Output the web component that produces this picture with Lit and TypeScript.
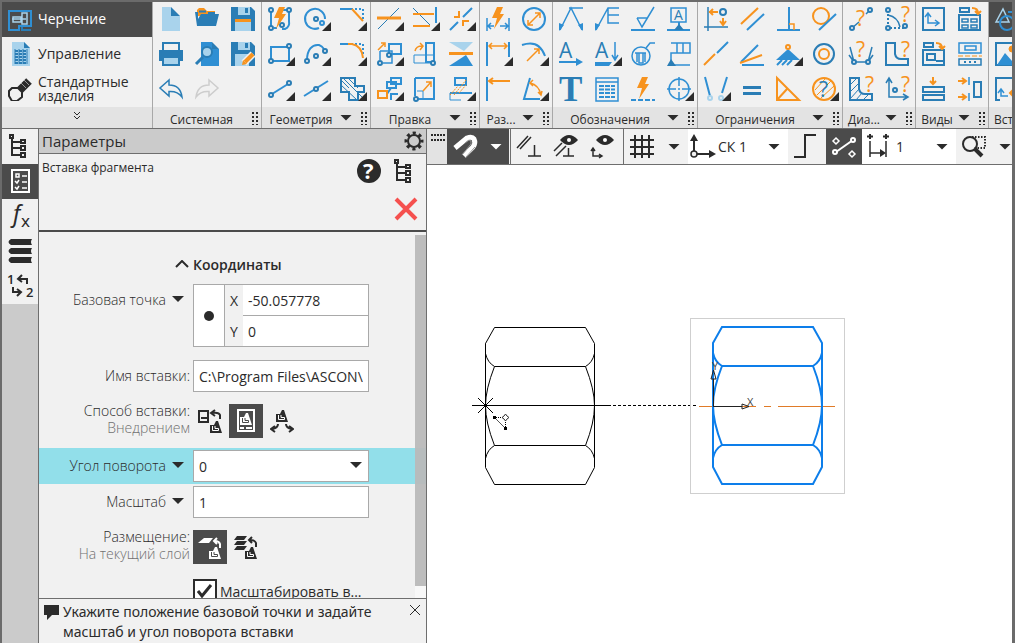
import { LitElement, html, svg, css, nothing } from "lit";
import { customElement } from "lit/decorators.js";
import { classMap } from "lit/directives/class-map.js";

const BLUE = "#2f8fd3";
const DEEP = "#2a7db5";
const PALE = "#a9d3ec";
const ORANGE = "#f7931e";
const INK = "#2b2b2b";

const line = (d: string, color = BLUE, width = 2, dash = "") =>
  svg`<path d=${d} fill="none" stroke=${color} stroke-width=${width} stroke-dasharray=${dash || nothing} />`;
const fill = (d: string, color = BLUE) => svg`<path d=${d} fill=${color} />`;
const ring = (x: number, y: number, r = 2, color = DEEP, width = 2, inner = "#f1f1f1") =>
  svg`<circle cx=${x} cy=${y} r=${r} fill=${inner} stroke=${color} stroke-width=${width} />`;
const glyph = (x: number, y: number, size: number, text: string, color = DEEP, family = "Open Sans", weight = 400) =>
  svg`<text x=${x} y=${y} font-size=${size} font-family=${family} font-weight=${weight} fill=${color}>${text}</text>`;
const ask = (x: number, y: number) => glyph(x, y, 21, "?", ORANGE, "Open Sans", 500);

const bolt = (x: number, y: number) =>
  svg`<path transform="translate(${x} ${y})" d="M5 0H11L8 7H12L2 22L5 11H0z" fill=${ORANGE} />`;
const cad = (x: number, y: number, ink: string, paper: string) => svg`<g transform="translate(${x} ${y})">
  <path d="M6 0H8L12 12H0V4H4z" fill=${ink} /><path d="M2.500 5V9.500H8.500V7.500H5V5" fill="none" stroke=${paper} /></g>`;

const icons: Record<string, unknown> = {
  // system
  fresh: [fill("M3 0H12V9H21V24H3z", PALE), fill("M12 0L21 9H12z", DEEP)],
  open: [fill("M2 3L4 1H9L12 4H20V9H2z", ORANGE), fill("M0 5H3V12L6 7H24L21 19H2z", DEEP), line("M4 4.5H11M13 6H20", DEEP)],
  save: [fill("M0 0H20L24 4V24H0z", DEEP), fill("M7 0H19V8H7z", PALE), fill("M14 1H17V6H14z", DEEP), fill("M4 12H20V24H4z", PALE), fill("M4 12H20V15H4z", ORANGE)],
  print: [fill("M0 8H24V19H0z", DEEP), line("M4 8V1H20V8", DEEP), fill("M3 15H21V24H3z", DEEP), fill("M5 16H19V22H5z", PALE)],
  preview: [fill("M6 0H17V7H24V24H6z", BLUE), fill("M17 0L24 7H17z", DEEP), line("M1 22L8 15", DEEP, 3), ring(12, 10, 5, DEEP, 2, PALE)],
  saveas: [fill("M0 0H20L24 4V24H0z", DEEP), fill("M7 0H19V8H7z", PALE), fill("M14 1H17V6H14z", DEEP), fill("M4 12H18V24H4z", PALE), line("M13 21L22 12", "#f1f1f1", 7), line("M14 20L22 12", ORANGE, 4), fill("M11 23L12 18L16 22z", ORANGE)],
  undo: line("M10 3L1 11L10 19V14.500C16 14 20 16 23 20C22 12 18 8 10 8z", DEEP, 1.500),
  redo: line("M14 3L23 11L14 19V14.500C8 14 4 16 1 20C2 12 6 8 14 8z", "#cdcdcd", 1.500),
  // geometry
  autoline: [line("M3 4V20M6 21H9M14 22H17Q22 20 21 14V4M15 3H19"), ring(3, 3), ring(21, 3), ring(3, 21), ring(14, 18), bolt(6, 0)],
  circle: [line("M15 21A10 10 0 1 1 21 12"), ring(12, 12, 2), ring(18, 16, 2, BLUE)],
  chamfer: [line("M0 2H11"), line("M11 2H23V12", BLUE, 2, "2 2"), line("M12 2L23 14", ORANGE)],
  rect: [line("M3 5H21V19H3z"), ring(21, 4), ring(3, 19)],
  arc: [line("M3 18C3 8 8 2 15 3Q18 4 20 7", BLUE), ring(3, 19), ring(12, 14), ring(21, 9)],
  fillet: [line("M0 2H11"), line("M11 2H23V12", BLUE, 2, "2 2"), line("M8 2H12Q22 4 23 16", ORANGE)],
  segment: [line("M4 17L20 7"), ring(3, 18), ring(21, 6)],
  aux: [line("M0 19L24 4"), ring(12, 12)],
  hatch: [line("M1 1H15V9H24V15H18V23H9V15H1z", DEEP), line("M1 3L9 11M3 1L23 21M8 1L18 11M1 8L17 23", DEEP, 1)],
  // edit
  trim: [line("M1 22L22 1", DEEP, 1), line("M0 11H24", ORANGE, 3)],
  extend: [line("M0 1L17 18", DEEP, 1), line("M23 0V16"), line("M0 7H21M0 19H17", ORANGE)],
  cut: [line("M1 23L9 15M14 10L23 1"), line("M10 4V10H5M14 19V14H20", ORANGE)],
  copy: [line("M12 2H24V12H12z"), line("M3 9H15V21H6M3 9V18", BLUE, 1.500), ring(12, 13), ring(3, 21), line("M1 8L7 2M4 1H8V5", ORANGE, 1.500)],
  rotate: [line("M13 1H21V20H13z"), line("M1 13H21M1 13V21H18", BLUE, 1), ring(20, 21), line("M2 9Q3 4 9 4M7 1L10 4L7 8", ORANGE, 1.500)],
  mirror: [fill("M0 0H24L15 9z", PALE), fill("M0 24H24L17 13z", BLUE), fill("M0 10H24V13H0z", ORANGE)],
  group: [line("M14 1H24V7H14zM10 5H19V11H10zM14 23V17H21M14 11L10 17", BLUE), line("M1 14H10V21H1z", ORANGE)],
  scale: [line("M2 1H21V22H4M2 1V19"), line("M4 14H10V22", BLUE, 1), ring(3, 22), line("M10 14L18 5M13 5H18V10", ORANGE, 1.500)],
  deform: [line("M6 1H17V8H6zM1 16H23", BLUE), line("M1 16V23H12", BLUE, 1), line("M1 18L9 9M5 18L17 3M10 16L17 8", ORANGE, 1, "2 1")],
  // dimensions
  autodim: [line("M1 11V24M23 11V24M2 19H8M14 19H22M5 16L2 19L5 22M19 16L22 19L19 22", BLUE, 1.500), bolt(6, 0)],
  diam: [ring(12, 12, 11, BLUE, 2, "none"), line("M6 18L18 6M6 13V18H11M13 6H18V11", ORANGE, 1.500)],
  lindim: [line("M1 0V24M23 0V15"), line("M3 4H21M6 1L3 4L6 7M18 1L21 4L18 7", ORANGE, 1.500)],
  raddim: [line("M0 3Q17 -3 23 14"), line("M5 19L17 7M12 7H17V12", ORANGE, 1.500)],
  basedim: [line("M1 0V24"), line("M3 4H24M7 1L3 4L7 7", ORANGE, 2)],
  angdim: [line("M8 1L2 22H18"), line("M8 6Q17 8 19 18M11 3L8 6L11 9M16 15L19 18L20 14", ORANGE, 1.500)],
  // annotations
  leader: [line("M1 23L12 1L23 23M10 1H24", BLUE, 1.500), fill("M0 24V16L5 18zM24 24V16L19 18z", BLUE)],
  leader2: [line("M1 23L13 1H24M13 1V16H24M13 8H24", BLUE, 1.500), fill("M0 24V16L5 18z", BLUE)],
  rough: [line("M0 23H24"), line("M6 11H16M6 11L11 20L23 0", BLUE, 1.500)],
  base: [line("M4 1H19V15H4z", BLUE, 1.500), glyph(7, 13, 14, "A"), line("M12 15V20M0 23H23"), fill("M7 23L12 17L17 23z", DEEP)],
  arrowA: [glyph(0, 16, 21, "A", DEEP, "Open Sans", 500), line("M0 20H20", BLUE), fill("M24 20L17 16V24z", BLUE)],
  sortA: [glyph(0, 16, 21, "A", DEEP, "Open Sans", 500), line("M20 0V17M17 13L20 18L23 13", BLUE, 1.500), fill("M0 20H17L14 24H0z", BLUE)],
  node: [ring(10, 14, 9, BLUE, 1.500), line("M4 11H15M6 11V20M8 11V21H12V11M14 11V20M15 6L19 1H24", BLUE, 1.500)],
  flag: [line("M4 1H23V11H4V23H23M10 1V11M16 1V11", BLUE, 1.500), fill("M0 24L4 17L9 24z", DEEP)],
  text: glyph(0, 24, 35, "T", DEEP, "Liberation Serif", 700),
  table: [line("M1 1H23V24H1zM1 5H23", BLUE, 1.500), line("M4 9H20M4 12.500H20M4 16H20M4 20H20", BLUE, 2, "5 1")],
  quick: [bolt(6, 0), line("M0 23H24", BLUE, 2, "5 2")],
  center: [ring(12, 12, 10, BLUE, 1.500, "none"), line("M0 12H9M15 12H24M12 0V9M12 15V24M11 12H13", BLUE, 1.500)],
  // constraints
  fixpt: [line("M4 0V24M0 20H24", DEEP, 1.500), ring(19, 5, 3), line("M5 5H14M9 2L6 5L9 8M19 11V18M16 14L19 18L22 14", ORANGE, 2)],
  parallel: [line("M1 17L18 1", ORANGE), line("M7 23L24 7")],
  perp: [line("M13 0V23M1 23H24"), line("M13 17H18V23", ORANGE, 1.500)],
  tangent: [ring(9, 9, 8, ORANGE, 2, "none"), line("M7 23L24 7")],
  collinear: [line("M0 23L11 12", ORANGE), line("M13 11L24 0")],
  angle: [line("M1 20L18 3"), line("M0 21L22 13", ORANGE), line("M2 23H24")],
  fix: [fill("M12 7L24 18H0z", BLUE), ring(12, 5, 2, ORANGE), line("M1 23L6 18M6 23L11 18M11 23L16 18", BLUE)],
  concentric: [ring(12, 12, 10, DEEP, 2, "none"), ring(12, 12, 5, ORANGE, 2, "none")],
  symm: [line("M1 0L6 19M23 0L18 16"), ring(6, 21, 2, PALE), ring(17, 21, 2, PALE)],
  equal: [fill("M3 9H21V12H3zM3 15H21V18H3z", DEEP)],
  tri: line("M1 1V23H23zM1 23L11 12", ORANGE),
  ask: [ring(12, 12, 11, ORANGE, 2, "none"), line("M3 13L13 2M5 18L20 3M9 21L22 9", ORANGE, 1), glyph(7, 20, 21, "?", DEEP, "Open Sans", 500)],
  // diagnostics
  q1: [line("M3 21L10 15M17 7L21 3", DEEP, 1.500), ring(3, 21), ring(21, 3), ask(7, 19)],
  q2: [line("M3 3V21H20", DEEP, 2, "2 2"), line("M3 8Q13 10 15 20", DEEP, 1.500), ring(3, 3), ring(3, 21), ring(20, 19), ask(16, 15)],
  q3: [line("M1 5L5 20H19L23 5M0 13L5 20M24 13L19 20", DEEP, 1.500), ring(5, 20), ring(19, 20), ask(7, 15)],
  q4: [line("M1 1H10V12Q11 17 16 17H23V23H1z", DEEP), ask(16, 15)],
  q5: [line("M1 1H10V12Q11 17 16 17H23V23H1z", DEEP), line("M1 8L8 1M1 15L10 6M1 22L10 12M7 23L13 16M14 23L20 17", DEEP, 1), ask(16, 15)],
  q6: [line("M4 2V20H22M1 6L4 1L7 6M18 17L23 20L18 23", DEEP, 1.500), ring(10, 13), ask(16, 15)],
  // views
  view1: [line("M1 1H22V23H1z", DEEP), line("M6 7V16H16M3 10L6 6L9 10M13 13L17 16L13 19", BLUE, 1.500)],
  view2: [line("M2 1H11V5H2zM1 8H22V23H1z", DEEP), line("M4 12H10V15H4zM13 12H19V15H13zM4 18H10V21H4zM13 18H19V21H13z", DEEP, 1.500), line("M14 1Q20 1 20 6M17 4L20 7L23 4", ORANGE)],
  view3: [line("M2 1H11V5H2zM1 8H22V23H1zM5 12H13V18H5zM14 19H22", DEEP), line("M14 1Q20 1 20 6M17 4L20 7L23 4", ORANGE)],
  view4: [line("M1 1H23V11H1zM7 4H18V8H7z", BLUE, 1.500), line("M1 17H23V23H1z", DEEP, 1.500), line("M6 20H18", DEEP, 2, "2 3"), line("M0 14H24", ORANGE, 1, "5 2")],
  view5: [line("M1 10H22V15H1zM1 18H22V23H1z", DEEP), line("M11 0V6M8 4L11 7L14 4", ORANGE)],
  view6: [line("M16 5H23V20H16z", DEEP), line("M11 0V8M11 16V24", BLUE, 1.500), line("M0 4H7M4 1L8 4L4 7M0 20H7M4 17L8 20L4 23", ORANGE)],
  shapes: [line("M1 15L8 2L14 15z", PALE, 1.500), line("M13 5H22V12", BLUE), ring(12, 16, 7, BLUE, 2, "none")],
  image: [line("M1 1H24V23H1z", DEEP), fill("M2 23L10 11L17 19L24 14V23z", BLUE), ring(17, 7, 3, ORANGE, 1, ORANGE)],
  insert: [line("M24 1H1V23H5", DEEP), line("M6 13V19H13M3 16L6 12L9 16", BLUE, 1.500), line("M24 16H15M18 13L15 16L18 19", ORANGE)],
  // side bar
  tree: [line("M4 4V21H13M4 8H13M4 14H13", INK), line("M2 1H5V4H2zM13 6H17V9H13zM13 12H17V16H13zM13 19H17V23H13z", INK)],
  params: [line("M4 1H21V23H4z", "#fff"), line("M8 5H11V8H8zM14 7H19M14 13H19M14 19H19M7 12L9 14L11 11M7 18L9 20L11 17", "#fff", 1.500)],
  fx: svg`<g fill=${INK} font-family="Noto Sans"><text x="5" y="18" font-size="23" font-style="italic">f</text><text x="13" y="23" font-size="17">x</text></g>`,
  layers: [0, 9, 18].map((y) => fill(`M3 ${y}H24Q22 ${y + 3} 24 ${y + 6}H3Q-2 ${y + 3} 3 ${y}`, INK)),
  swap: [glyph(-1, 10, 13, "1", INK, "Open Sans", 600), glyph(18, 23, 13, "2", INK, "Open Sans", 600), line("M19 10V5H11M14 1L10 5L14 8M5 13V18H12M9 15L13 18L9 22", INK)],
  // panel
  help: [ring(12, 12, 11, INK, 2, INK), glyph(6, 20, 22, "?", "#fff", "Open Sans", 700)],
  cancel: line("M2 3L22 23M22 3L2 23", "#f5504e", 4),
  gear: [ring(12, 12, 6, INK, 2, "none"), svg`<circle cx="12" cy="12" r="8" fill="none" stroke=${INK} stroke-width="3" stroke-dasharray="3.140 3.140" stroke-dashoffset="1.570" />`],
  embedA: [line("M1 2H10V13H1zM3 9H9", INK), line("M22 10V6Q21 3 14 4M17 1L13 4L17 7", INK), cad(12, 12, INK, "#fff")],
  embedB: [line("M4 1H20V22H4z", "#fff"), cad(6, 4, "#fff", "#4b4b4b"), line("M6 19H10M12 19H18", "#fff")],
  embedC: [cad(6, 1, INK, "#fff"), line("M8 15Q8 19 2 20M5 17L1 20L5 23M16 15Q16 19 22 20M19 17L23 20L19 23", INK)],
  layerA: [fill("M0 8L6 3H15L11 8z", "#fff"), line("M22 13V9Q21 6 17 6M19 3L16 6L19 9", "#fff"), cad(11, 12, "#fff", "#4b4b4b")],
  layerB: [fill("M0 5L3 1H13L10 5zM0 10L3 6H13L10 10zM0 15L3 11H13L10 15z", INK), line("M22 12V8Q21 5 16 5M18 2L15 5L18 8", INK), cad(11, 12, INK, "#fff")],
  // view toolbar
  magnet: [line("M2 14L14 4Q19 2 21 5Q23 9 20 13L11 22", "#fff", 5), line("M12 9L16 6Q19 6 18 10L9 21M13 23L22 13", "#999", 1)],
  osnap: [line("M0 14L11 2M3 15L14 3M11 22H24M17.500 11V22", INK, 1.500)],
  osnapEye: [line("M0 17L8 9M2 22L12 12M9 22H20M14.500 14V22", INK, 1.500), fill("M6 6Q15 -4 24 6Q15 16 6 6", INK), ring(15, 6, 3, INK, 2, "#fff")],
  axisEye: [line("M2 14V22H11M0 17L2 14L4 17M8 20L11 22L8 24", INK, 1.500), fill("M5 6Q14 -4 23 6Q14 16 5 6", INK), ring(14, 6, 3, INK, 2, "#fff")],
  grid: line("M0 6H24M0 13H24M0 20H24M5 1V24M12 1V24M19 1V24", INK, 2),
  axes: [line("M4 2V20H22", INK, 2), fill("M4 0L8 7H0zM26 20L19 16V24z", INK), ring(4, 20, 3, INK, 1.500)],
  step: line("M0 23H11V1H22", INK, 2),
  snaps: [line("M4 18L21 6", "#fff"), ring(3, 18, 2, "#fff", 2, "#4b4b4b"), ring(21, 6, 2, "#fff", 2, "#4b4b4b"), line("M4 4L7 7L4 10L1 7zM20 17L23 20L20 23L17 20z", "#fff", 1.500)],
  dimstyle: [line("M3 8V24M19 8V24M3 20H16", INK, 1.500), fill("M19 20L13 16V24z", INK), line("M3 1V6M0 3.500H6M19 1V6M16 3.500H22", INK, 2)],
  lens: [line("M10 3H23V14H12", INK, 2, "1.500 1.500"), ring(8, 10, 7, INK, 2, "none"), line("M13 15L20 22", INK, 4)],
};

interface Tool { icon: string; name: string; more?: boolean; on?: boolean }
const t = (spec: string): Tool[] =>
  spec.split(" ").map((s) => ({ icon: s.replace(/[*!]/g, ""), name: s.replace(/[*!]/g, ""), more: s.includes("*"), on: s.includes("!") }));

const cell = (tool: Tool) => html`<button class=${classMap({ cell: true, on: !!tool.on })} aria-label=${tool.name}>
  <svg width="36" height="35" viewBox="0 0 36 35"><g transform="translate(6 5)">${icons[tool.icon]}</g>
  ${tool.more ? svg`<path d="M33 20V29H24z" fill=${INK} />` : nothing}</svg></button>`;

const groups = [
  { label: "Системная", cols: 3, menu: false, tools: t("fresh open save print preview saveas undo redo") },
  { label: "Геометрия", cols: 3, menu: true, tools: t("autoline circle* chamfer* rect* arc* fillet* segment* aux* hatch*") },
  { label: "Правка", cols: 3, menu: true, tools: t("trim* extend* cut* copy* rotate mirror group* scale deform*") },
  { label: "Раз...", cols: 2, menu: true, tools: t("autodim diam lindim* raddim* basedim angdim*") },
  { label: "Обозначения", cols: 4, menu: true, tools: t("leader leader2 rough base arrowA sortA* node flag text table quick center*") },
  { label: "Ограничения", cols: 4, menu: true, tools: t("fixpt parallel perp tangent collinear angle fix* concentric symm* equal tri ask*") },
  { label: "Диа...", cols: 2, menu: true, tools: t("q1 q2 q3 q4 q5 q6") },
  { label: "Виды", cols: 2, menu: true, tools: t("view1 view2 view3 view4 view5 view6") },
  { label: "Вста", cols: 1, menu: false, tools: t("shapes! image insert") },
];

const base = css`
  * { box-sizing: border-box; }
  button { font: inherit; color: inherit; background: none; border: 0; padding: 0; margin: 0; }
  svg { display: block; flex: none; }
  .cell { width: 36px; height: 35px; overflow: hidden; }
  .on { background: #4b4b4b; color: #fff; }
  .down { width: 12px; height: 6px; background: currentColor; clip-path: polygon(0 0, 100% 0, 50% 100%); flex: none; }
`;

@customElement("cad-ribbon")
class CadRibbon extends LitElement {
  static styles = [base, css`
    :host { display: flex; flex: none; overflow: hidden; background: #f1f1f1; border-bottom: 1px solid #6e6e6e; }
    .modes { flex: none; width: 151px; border-right: 1px solid #a8a8a8; }
    .mode { display: flex; align-items: center; width: 100%; height: 35px; padding: 0 0 2px 6px; gap: 6px; font-size: 14px; line-height: 14px; text-align: left; }
    .expand { display: flex; justify-content: center; align-items: center; width: 100%; height: 21px; padding-bottom: 4px; background: #e3e3e3; }
    .group { flex: none; border-right: 1px solid #a8a8a8; }
    .tools { display: grid; grid-auto-rows: 35px; height: 105px; }
    .c1 { grid-template-columns: 36px; }
    .c2 { grid-template-columns: repeat(2, 36px); }
    .c3 { grid-template-columns: repeat(3, 36px); }
    .c4 { grid-template-columns: repeat(4, 36px); }
    .label { display: flex; align-items: center; height: 21px; background: #e3e3e3; font-size: 12px; white-space: nowrap; }
    .name { flex: 1; text-align: center; padding-top: 3px; }
    .menu { display: flex; width: 19px; }
    .grip { width: 11px; }
  `];

  render() {
    return html`
      <nav class="modes">
        <button class="mode on"><svg width="24" height="24">${line("M1 4H23V19H11V23H1z", BLUE)}${line("M14 20V23H23", DEEP)}
          ${line("M4 12H18M5 10H13V15H5zM14 6H19V17H14z", PALE, 1.500)}</svg>Черчение</button>
        <button class="mode"><svg width="24" height="24">${fill("M4 0H16L22 6V24H4z", PALE)}${fill("M16 0L22 6H16z", DEEP)}
          ${line("M7 9H19M7 12H19M7 15H19M7 18H19M7 21H19", DEEP, 2, "3 1")}${line("M7 7V22M11 7V22M15 7V22M19 7V22", DEEP, 1)}</svg>Управление</button>
        <button class="mode"><svg width="24" height="24">${line("M11 14L21 4", INK, 8)}${line("M13 6L18 11M16 3L21 8", "#999", 1)}
          <path d="M4 11H10L14 15V20L9 24H4L1 19V14z" fill="#f1f1f1" stroke=${INK} stroke-width="2" /></svg>Стандартные<br />изделия</button>
        <button class="expand" aria-label="Развернуть"><svg width="8" height="8">${line("M1 0L4 3L7 0M1 4L4 7L7 4", INK, 1)}</svg></button>
      </nav>
      ${groups.map((g) => html`<section class="group">
        <div class="tools c${g.cols}">${g.tools.map(cell)}</div>
        <div class="label"><span class="name">${g.label}</span>
          ${g.menu ? html`<button class="menu" aria-label=${g.label}><span class="down"></span></button>` : nothing}
          ${g.cols > 1 ? html`<svg class="grip" width="11" height="14">${line("M3 1V14M7 1V14", INK, 2, "2 2")}</svg>` : nothing}
        </div></section>`)}`;
  }
}

@customElement("cad-params")
class CadParams extends LitElement {
  static styles = [base, css`
    :host { display: flex; flex-direction: column; flex: none; width: 388px; min-height: 0; background: #f1f1f1; border-right: 1px solid #6e6e6e; }
    .title { display: flex; align-items: center; height: 25px; flex: none; padding-left: 3px; background: #cbcbcb; border-bottom: 1px solid #6e6e6e; font-size: 15px; }
    .title h2 { flex: 1; margin: 0; font: inherit; }
    .command { display: grid; grid-template-columns: 1fr 36px 36px; grid-template-rows: 35px 41px; padding: 0 3px; flex: none; border-bottom: 2px solid #4b4b4b; font-size: 12px; }
    .command h3 { margin: 5px 0; font: inherit; }
    .cancel { grid-column: 3; align-self: center; }
    .form { flex: 1; min-height: 0; overflow: hidden; position: relative; padding-top: 22px; }
    .row { display: grid; grid-template-columns: 151px 176px; column-gap: 3px; font-size: 14px; }
    .lab { display: flex; justify-content: flex-end; align-items: center; gap: 6px; height: 30px; font-weight: 300; }
    .lab .down { margin-right: 6px; }
    .head { display: flex; align-items: center; gap: 4px; height: 20px; margin: 0 0 10px 136px; font-size: 14px; font-weight: 600; }
    .two { display: block; text-align: right; font-weight: 300; line-height: 17px; margin-top: -2px; }
    .sub { color: #707070; }
    input, select { font: inherit; font-size: 14px; color: #2b2b2b; background: #fff; border: 1px solid #a9a9a9; border-radius: 0; width: 100%; height: 32px; padding: 0 5px; outline: 0; appearance: none; }
    .point { display: grid; grid-template-columns: 31px 18px 1fr; border: 1px solid #a9a9a9; background: #fff; font-size: 14px; margin-bottom: 13px; }
    .dot { grid-row: span 2; display: grid; place-items: center; border-right: 1px solid #a9a9a9; }
    .axis { display: grid; place-items: center; background: #f1f1f1; }
    .point input { border: 0; height: 30px; }
    .point .first { border-bottom: 1px solid #a9a9a9; height: 31px; }
    .name { margin-bottom: 12px; }
    .mode { margin-bottom: 10px; }
    .icons { display: flex; gap: 2px; }
    .pick { width: 34px; height: 34px; display: grid; place-items: center; }
    .angle { background: #92dfea; padding: 2px 0; }
    .combo { position: relative; }
    .combo .down { position: absolute; right: 7px; top: 12px; pointer-events: none; }
    .scale { padding: 2px 0; margin-bottom: 10px; }
    .place { margin-bottom: 15px; }
    .fit { display: flex; align-items: center; gap: 3px; margin-left: 154px; font-size: 14px; position: relative; }
    .fit input { width: 24px; height: 24px; border: 2px solid #2b2b2b; padding: 0; margin: 0; flex: none; }
    .fit svg { position: absolute; left: 4px; top: 4px; pointer-events: none; }
    .track { position: absolute; right: 0; top: 3px; bottom: 0; width: 11px; background: #ffffff88; }
    .thumb { height: calc(100% - 12px); background: #b4b4b4dd; }
    .hint { display: flex; flex: none; align-items: flex-start; gap: 3px; padding: 3px 5px 0 5px; height: 45px; border-top: 1px solid #6e6e6e; font: 14px/20px "Noto Sans", sans-serif; }
    .hint p { flex: 1; margin: 0; }
    .bubble, .close { margin-top: 2px; }
  `];

  render() {
    const pick = (icon: string, on = false) => html`<button type="button" class=${classMap({ pick: true, on })} aria-label=${icon}><svg width="24" height="24">${icons[icon]}</svg></button>`;
    return html`
      <header class="title"><h2>Параметры</h2><button aria-label="Настройка"><svg width="24" height="24">${icons.gear}</svg></button></header>
      <div class="command"><h3>Вставка фрагмента</h3>
        ${cell({ icon: "help", name: "Справка" })}${cell({ icon: "tree", name: "Дерево" })}
        <button class="cell cancel" aria-label="Завершить"><svg width="36" height="35"><g transform="translate(7 4)">${icons.cancel}</g></svg></button>
      </div>
      <form class="form">
        <button type="button" class="head"><svg width="14" height="8">${line("M1 7L7 1L13 7", INK)}</svg>Координаты</button>
        <div class="row"><span class="lab">Базовая точка<span class="down"></span></span>
          <div class="point"><span class="dot"><svg width="10" height="10"><circle cx="5" cy="5" r="5" fill=${INK} /></svg></span>
            <label class="axis" for="px">X</label><input class="first" id="px" value="-50.057778" />
            <label class="axis" for="py">Y</label><input id="py" value="0" /></div></div>
        <div class="row name"><label class="lab" for="file">Имя вставки:</label><input id="file" value="C:\\Program Files\\ASCON\\" /></div>
        <div class="row mode"><span class="two">Способ вставки:<br /><span class="sub">Внедрением</span></span>
          <div class="icons">${pick("embedA")}${pick("embedB", true)}${pick("embedC")}</div></div>
        <div class="row angle"><label class="lab" for="angle">Угол поворота<span class="down"></span></label>
          <div class="combo"><select id="angle"><option>0</option></select><span class="down"></span></div></div>
        <div class="row scale"><label class="lab" for="scale">Масштаб<span class="down"></span></label><input id="scale" value="1" /></div>
        <div class="row place"><span class="two">Размещение:<br /><span class="sub">На текущий слой</span></span>
          <div class="icons">${pick("layerA", true)}${pick("layerB")}</div></div>
        <label class="fit"><input type="checkbox" checked /><svg width="16" height="16">${line("M1 8L5 13L14 2", INK, 3)}</svg>Масштабировать в...</label>
        <div class="track"><div class="thumb"></div></div>
      </form>
      <footer class="hint"><svg class="bubble" width="16" height="16">${fill("M0 1H15V11H8L3 16V11H0z", INK)}</svg>
        <p>Укажите положение базовой точки и задайте масштаб и угол поворота вставки</p>
        <button class="close" aria-label="Закрыть"><svg width="12" height="12">${line("M1 1L11 11M11 1L1 11", INK, 1)}</svg></button></footer>`;
  }
}

@customElement("cad-toolbar")
class CadToolbar extends LitElement {
  static styles = [base, css`
    :host { display: flex; flex: none; height: 36px; overflow: hidden; background: #f1f1f1; border-bottom: 1px solid #6e6e6e; font-size: 14px; }
    .handle { width: 20px; padding: 5px 4px; background: #e3e3e3; flex: none; }
    .set { display: flex; align-items: center; flex: none; }
    .magnet { width: 62px; gap: 7px; }
    .snap { width: 114px; border: solid #6e6e6e; border-width: 0 1px; margin-left: 1px; }
    .snap .cell { width: 37px; }
    .grid { width: 64px; gap: 8px; }
    .pick { display: flex; align-items: center; flex: none; height: 35px; background: #fff; }
    .csys { width: 100px; }
    .dims { width: 94px; }
    .pick .text { flex: 1; text-align: left; }
    .pick .down { margin-right: 8px; }
    .step { width: 38px; }
    .zoom { gap: 7px; }
  `];

  render() {
    const b = (icon: string, on = false) => cell({ icon, name: icon, on });
    return html`
      <span class="handle"><svg width="14" height="8">${line("M0 1H14M0 6H14", INK, 2, "2 1")}</svg></span>
      <div class="set magnet on">${b("magnet", true)}<span class="down"></span></div>
      <div class="set snap">${b("osnap")}${b("osnapEye")}${b("axisEye")}</div>
      <div class="set grid">${b("grid")}<span class="down"></span></div>
      <button class="pick csys"><svg width="30" height="35"><g transform="translate(2 5)">${icons.axes}</g></svg><span class="text">СК 1</span><span class="down"></span></button>
      <div class="set step">${b("step")}</div>
      ${b("snaps", true)}
      <button class="pick dims"><svg width="34" height="35"><g transform="translate(5 4)">${icons.dimstyle}</g></svg><span class="text">1</span><span class="down"></span></button>
      <div class="set zoom">${b("lens")}<span class="down"></span></div>`;
  }
}

const nut = (x: number, y: number, color: string, width: number) => svg`<g transform="translate(${x} ${y})" fill="none" stroke=${color} stroke-width=${width}>
  <path d="M9 -78H100L109 -62V62L100 79H9L0 62V-62z" />
  <path d="M9 -39H100M9 40H100" />
  <path d="M0 -62V-52Q2 -43 9 -39Q0 -16 0 0Q0 17 9 40Q2 44 0 53M109 -52Q107 -43 100 -39Q109 -16 109 0Q109 17 100 40Q107 44 109 53" />
</g>`;

@customElement("cad-canvas")
class CadCanvas extends LitElement {
  static styles = css`
    :host { display: block; flex: 1; min-height: 0; background: #fff; overflow: hidden; }
    svg { display: block; width: 100%; height: 100%; }
  `;

  render() {
    return html`<svg role="img" aria-label="Чертёж">
      ${nut(58.500, 240.500, "#000", 1)}
      ${line("M45 240.500H181M51 233L66 248M66 233L51 248", "#000", 1)}
      ${line("M181 240.500H271", "#000", 1, "3 2")}
      ${line("M67 252L78 263", "#555", 1)}${line("M67 252.500H78M78.500 253V263", "#000", 1, "1 1")}
      ${fill("M66 251H69V254H66zM77 262H80V265H77z", "#000")}
      <path d="M78.500 249L80 251L82 252.500L80 254L78.500 256L77 254L75 252.500L77 251z" fill="#fff" stroke="#333" />
      <rect x="263.500" y="153.500" width="154" height="175" fill="none" stroke="#cfcfcf" />
      ${line("M272 241.500H329M337 241.500H344M351 241.500H408", "#e07b28", 1)}
      ${nut(286, 240, "#0d7eea", 2)}
      ${line("M286.500 241.500V214M286 241.500H315M315 239V244L322 241.500zM284 214H289L286.500 205z", "#222", 1)}
      <g font-family="Open Sans" font-size="11" fill="#444"><text x="285" y="205">Y</text><text x="320" y="241">X</text></g>
    </svg>`;
  }
}

@customElement("app-root")
class AppRoot extends LitElement {
  static styles = [base, css`
    :host { display: flex; flex-direction: column; height: 100vh; overflow: hidden; box-sizing: border-box; background: #cbcbcb;
      border: solid #6b6b6b; border-width: 2px 3px 0 2px; color: #2b2b2b; font-family: "Open Sans", "Noto Sans", sans-serif; }
    .work { display: flex; flex: 1; min-height: 0; }
    .side { width: 37px; flex: none; display: flex; flex-direction: column; border-right: 1px solid #6e6e6e; background: #cbcbcb; }
    .side .cell { background: #f1f1f1; flex: none; }
    .side .on { background: #4b4b4b; }
    .view { flex: 1; min-width: 0; display: flex; flex-direction: column; }
  `];

  render() {
    return html`
      <cad-ribbon></cad-ribbon>
      <main class="work">
        <nav class="side">${t("tree params! fx layers swap").map(cell)}</nav>
        <cad-params></cad-params>
        <div class="view"><cad-toolbar></cad-toolbar><cad-canvas></cad-canvas></div>
      </main>`;
  }
}
